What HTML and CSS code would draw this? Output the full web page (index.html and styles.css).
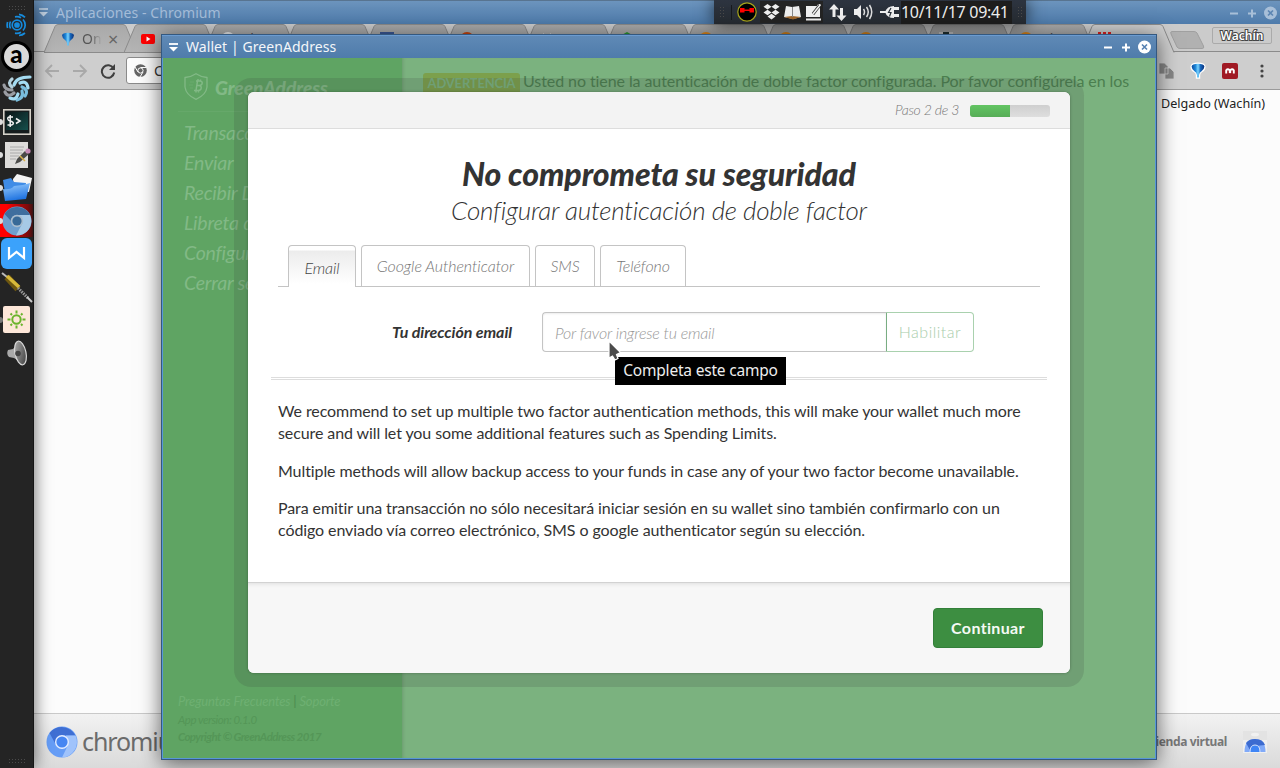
FILE: index.html
```html
<!DOCTYPE html>
<html lang="es">
<head>
<meta charset="utf-8">
<title>Wallet | GreenAddress</title>
<link rel="stylesheet" href="styles.css">
</head>
<body>
<svg width="0" height="0" class="defs">
  <defs>
    <linearGradient id="gTab" x1="0" y1="0" x2="0" y2="1"><stop offset="0" stop-color="#a9a9a9"/><stop offset="1" stop-color="#b5b5b5"/></linearGradient>
    <linearGradient id="gFolder" x1="0" y1="0" x2="0.3" y2="1"><stop offset="0" stop-color="#9dd0ff"/><stop offset="1" stop-color="#1f73e0"/></linearGradient>
    <linearGradient id="gPin" x1="0" y1="0" x2="1" y2="0"><stop offset="0" stop-color="#0b4a9c"/><stop offset=".3" stop-color="#1e86d8"/><stop offset=".5" stop-color="#7ad4ff"/><stop offset=".7" stop-color="#1668bd"/><stop offset="1" stop-color="#0a2f78"/></linearGradient>
    <linearGradient id="gTerm" x1="0" y1="0" x2="1" y2="1"><stop offset="0" stop-color="#0b1416"/><stop offset="1" stop-color="#15504c"/></linearGradient>
    <linearGradient id="gCone" x1="0" y1="0" x2="1" y2="1"><stop offset="0" stop-color="#b8b8b8"/><stop offset="1" stop-color="#333"/></linearGradient>
    <symbol id="tabShape" viewBox="0 0 94 29"><path d="M0 28.5 L11 2.5 Q12 .5 14 .5 H79 Q81 .5 82 2.5 L93 28.5Z" fill="url(#gTab)" stroke="#8b8b8b"/></symbol>
    <symbol id="pin" viewBox="0 0 14 15"><path d="M.6 3.500Q1 .8 7 .8T13.400 3.500Q13.200 6.500 10.500 8.200 8.400 9.500 8 12V14.500H6V12Q5.600 9.500 3.500 8.200 .8 6.500 .6 3.500Z" fill="url(#gPin)"/></symbol>
  </defs>
</svg>
<div class="desktop">
  <nav class="dock">
    <div class="grip"></div>
    <div class="dock-item"><svg width="22" height="24" viewBox="0 0 22 24" fill="none" stroke="#168bdc" stroke-width="1.7"><circle cx="11" cy="12" r="2" fill="#168bdc"/><circle cx="11" cy="12" r="4.800"/><path d="M9 3.800a8 8 0 0 1 6 1M17 6.500a8 8 0 0 1 0 11M15 19.200a8 8 0 0 1-6 1M4.500 8.500a8 8 0 0 0 0 7M1.600 9a10 10 0 0 0 0 6M13 1.300a10 10 0 0 1 6 3M19 20a10 10 0 0 1-6 2.500"/></svg></div>
    <div class="dock-item"><span class="app-a">a</span></div>
    <div class="dock-item"><svg width="30" height="28" viewBox="0 0 30 28" fill="none" stroke-width="3.200" stroke-linecap="round"><path d="M12 10Q14 2 28 2M18 8Q25 5 26 13" stroke="#a5dcf2"/><path d="M20 12Q27 15 23 21M20 16Q22 23 15 25" stroke="#79bddd"/><path d="M16 19Q14 26 8 23" stroke="#a5dcf2"/><path d="M12 18Q6 23 3 17M10 15Q3 15 2 10" stroke="#9a9da3"/><path d="M10 12Q5 8 10 4" stroke="#b5d2de"/></svg></div>
    <div class="dock-item"><i class="run"></i><svg width="28" height="26" viewBox="0 0 28 26"><rect x=".8" y=".8" width="26.400" height="24.400" fill="#151c1d" stroke="#d5d1c8" stroke-width="1.600"/><rect x="3" y="3" width="22" height="18" fill="url(#gTerm)"/><path d="M10 8H6.500Q4.500 8.200 4.800 10T7 12 10 13.500 8.500 16H4.500M7.200 6V18M13 9.500 17 12 13 14.500" fill="none" stroke="#f2f2f2" stroke-width="1.500"/></svg></div>
    <div class="dock-item"><i class="run"></i><svg width="28" height="28" viewBox="0 0 28 28"><rect x="2" y="1" width="23" height="26" fill="#dddcda"/><path d="M7 6H21M7 9H20M7 12H19M7 15H16M7 18H13" stroke="#aaa" stroke-width="1"/><path d="M12 23 14 18 22 10 26 13 17 21Z" fill="#4a4a48"/><path d="M17 15 22 20" stroke="#d8b24a" stroke-width="1.500"/><circle cx="25" cy="10" r="2.600" fill="#c78bb6"/></svg></div>
    <div class="dock-item"><i class="run"></i><svg width="30" height="28" viewBox="0 0 30 28"><path d="M11 5 15 0 30 4 27 18 12 16Z" fill="#f4f4f4"/><path d="M1 6 9 4 12 8 24 9 22 24 4 25Z" fill="#3f8ce6"/><path d="M1 15 Q9 16 12 12 Q20 12 28 9 L24 25 3 27Z" fill="url(#gFolder)"/></svg></div>
    <div class="dock-item active"><i class="run"></i><svg width="30" height="30" viewBox="0 0 30 30"><circle cx="15" cy="15" r="14.500" fill="#6f9fce"/><path d="M2.500 8A14.500 14.500 0 0 1 28 9H15A6 6 0 0 0 9 15Z" fill="#3f6e9e"/><path d="M28 9A14.500 14.500 0 0 1 14 29.500L20.500 17 15 9Z" fill="#a6c9e6"/><circle cx="15" cy="15" r="6.200" fill="#a9bccd"/><circle cx="15" cy="15" r="4.600" fill="#386997"/></svg></div>
    <div class="dock-item"><svg width="31" height="31" viewBox="0 0 31 31"><rect width="31" height="31" rx="6" fill="#3ba2fb"/><path d="M8 9V20L15.500 14 23 20V9" fill="none" stroke="#fff" stroke-width="2.200"/></svg></div>
    <div class="dock-item"><svg width="32" height="32" viewBox="0 0 32 32"><path d="M1 2 6 6" stroke="#bbb" stroke-width="2"/><path d="M6 6 17 18" stroke="#6e5710" stroke-width="7"/><path d="M6 5 18 16" stroke="#d7b93a" stroke-width="3.500"/><path d="M17 17 27 27" stroke="#999" stroke-width="3" stroke-dasharray="1.500 1"/><path d="M26 26 31 31" stroke="#ccc" stroke-width="2"/></svg></div>
    <div class="dock-item"><i class="run dim"></i><svg width="27" height="27" viewBox="0 0 27 27"><rect width="27" height="27" rx="2" fill="#fde7d9"/><g fill="none" stroke="#6ab42c" stroke-width="2"><circle cx="13.500" cy="13.500" r="4.200"/><path d="M13.500 4.500V7.500M13.500 19.500V22.500M4.500 13.500H7.500M19.500 13.500H22.500M7.500 7.500 9 9M18 18 19.500 19.500M19.500 7.500 18 9M9 18 7.500 19.500"/></g></svg></div>
    <div class="dock-item"><svg width="22" height="26" viewBox="0 0 22 26"><path d="M2 10 7 9 14 1 18 24 8 18 3 17Q0 14 2 10Z" fill="#a9a9a9"/><ellipse cx="14.500" cy="13" rx="5.500" ry="12" transform="rotate(-12 14.500 13)" fill="url(#gCone)" stroke="#d8d8d8" stroke-width="1.200"/><circle cx="12" cy="13.500" r="2.800" fill="#444"/></svg></div>
    <div class="grip bottom"></div>
  </nav>

  <section class="browser">
    <header class="b-title">
      <svg width="9" height="9" viewBox="0 0 9 9" class="t-menu"><path d="M0 1H9" stroke="#c0d0e2" stroke-width="1.600"/><path d="M0 4H9L4.500 8.500Z" fill="#c0d0e2"/></svg>
      <span class="t-text">Aplicaciones - Chromium</span>
      <svg width="50" height="14" viewBox="0 0 50 14" class="t-ctl dim"><path d="M2 7.500H10M20 7.500H28M24 3.500V11.500" stroke="currentColor" stroke-width="2"/><circle cx="42.500" cy="7" r="6.500" fill="currentColor"/><path d="M40 4.500 45 9.500M45 4.500 40 9.500" stroke="#5d86b3" stroke-width="1.600"/></svg>
    </header>
    <div class="tabs">
      <div class="tab"><svg class="shape"><use href="#tabShape"/></svg><svg class="fav" viewBox="0 0 14 15"><use href="#pin"/></svg><span class="fade">On</span><b class="x">×</b></div>
      <div class="tab"><svg class="shape"><use href="#tabShape"/></svg><svg class="fav" viewBox="0 0 14 14"><rect y="2" width="14" height="10" rx="2" fill="#f00"/><path d="M5.500 4.500V9.500L9.500 7Z" fill="#fff"/></svg><span>P</span></div>
      <div class="tab"><svg class="shape"><use href="#tabShape"/></svg><svg class="fav" viewBox="0 0 14 14"><circle cx="7" cy="7" r="7" fill="#eee"/><circle cx="7" cy="5" r="3" fill="#3a8fd0"/></svg><span>Si</span></div>
      <div class="tab"><svg class="shape"><use href="#tabShape"/></svg><i class="fav"></i><span>P</span></div>
      <div class="tab"><svg class="shape"><use href="#tabShape"/></svg><svg class="fav" viewBox="0 0 14 14"><rect width="14" height="14" fill="#3b5998"/></svg><span>M</span></div>
      <div class="tab"><svg class="shape"><use href="#tabShape"/></svg><svg class="fav" viewBox="0 0 14 14"><circle cx="7" cy="7" r="7" fill="#c8440c"/></svg><span>14</span></div>
      <div class="tab"><svg class="shape"><use href="#tabShape"/></svg><svg class="fav" viewBox="0 0 14 14"><path d="M3 1 6 4M11 1 8 4" stroke="#ccc"/></svg><span>C</span></div>
      <div class="tab"><svg class="shape"><use href="#tabShape"/></svg><svg class="fav" viewBox="0 0 14 14"><path d="M7 0 14 4V11L7 14 0 11V4Z" fill="#2a9a30"/></svg><span>C</span></div>
      <div class="tab"><svg class="shape"><use href="#tabShape"/></svg><svg class="fav" viewBox="0 0 14 14"><circle cx="7" cy="7" r="7" fill="#e48a1a"/></svg><span>F</span></div>
      <div class="tab"><svg class="shape"><use href="#tabShape"/></svg><svg class="fav" viewBox="0 0 14 14"><circle cx="7" cy="7" r="7" fill="#e48a1a"/></svg><span>C</span></div>
      <div class="tab"><svg class="shape"><use href="#tabShape"/></svg><svg class="fav" viewBox="0 0 14 14"><circle cx="7" cy="7" r="7" fill="#e48a1a"/></svg><span>A</span></div>
      <div class="tab"><svg class="shape"><use href="#tabShape"/></svg><svg class="fav" viewBox="0 0 14 14"><rect width="14" height="14" fill="#ccc"/><rect x="4" width="6" height="14" fill="#233"/></svg><span>D</span></div>
      <div class="tab"><svg class="shape"><use href="#tabShape"/></svg><svg class="fav" viewBox="0 0 14 14"><circle cx="7" cy="7" r="7" fill="#e48a1a"/></svg><span>Bit</span></div>
      <div class="tab on"><svg class="shape" viewBox="0 0 94 29"><path d="M0 28.500 L11 2.500 Q12 .5 14 .5 H79 Q81 .5 82 2.500 L93 28.500" fill="#cecece" stroke="#8b8b8b"/></svg><svg class="fav" viewBox="0 0 14 14"><path d="M0 0H3V14H0ZM5 0H8V14H5ZM10 0H13V14H10Z" fill="#e02020"/></svg><span>A</span></div>
      <svg class="newtab" width="35" height="18" viewBox="0 0 35 18"><path d="M2 .5H24Q26 .5 27 2L33.500 15Q34.500 17.500 32 17.500H10Q8 17.500 7 16L1 3Q0 .5 2 .5Z" fill="#b1b1b1" stroke="#a0a0a0"/></svg>
      <span class="user">Wachín</span>
    </div>
    <div class="toolbar">
      <svg width="60" height="16" viewBox="0 0 60 16" fill="none" stroke="#a9a9a9" stroke-width="1.800"><path d="M15 8H2M8 2 2 8 8 14M29 8H42M36 2 42 8 36 14"/></svg>
      <svg width="16" height="16" viewBox="0 0 16 16" class="reload"><path d="M13.500 5.500A6.200 6.200 0 1 0 14.200 9.500" fill="none" stroke="#3f3f3f" stroke-width="2"/><path d="M15 1V7H9Z" fill="#3f3f3f"/></svg>
      <div class="omni"><svg width="13" height="13" viewBox="0 0 13 13"><circle cx="6.500" cy="6.500" r="6.300" fill="#666"/><circle cx="6.500" cy="6.500" r="2.600" fill="#666" stroke="#fff"/><path d="M6.500 3.500H12.500M4 8 1 3M9 8 6 13" stroke="#fff"/></svg><span>Chromium</span></div>
      <svg width="15" height="16" viewBox="0 0 15 16" class="copy"><path d="M0 0H5.500L9 3.500V11H0ZM6 5H11L15 9V16H6Z" fill="#868686" stroke="#cecece" stroke-width=".8"/></svg>
      <svg width="16" height="17" viewBox="-1 -1 16 17" class="ext"><path d="M-.6 3.500Q0-.4 7-.4T14.600 3.500Q14.500 7.500 11 9.200 9.400 10 9.200 12V15.800H4.800V12Q4.600 10 3 9.200 -.5 7.500 -.6 3.500Z" fill="#fff"/><use href="#pin" width="14" height="15"/></svg>
      <svg width="16" height="16" viewBox="0 0 16 16"><rect width="16" height="16" rx="2" fill="#a01a24"/><path d="M4.200 10.500V7.300Q6 5 8 7.800 10 5 11.800 7.300V10.500" fill="none" stroke="#fff" stroke-width="1.900"/><circle cx="8" cy="9" r="1.300" fill="#fff"/></svg>
      <svg width="4" height="14" viewBox="0 0 4 14" class="dots" fill="#444"><circle cx="2" cy="2" r="1.600"/><circle cx="2" cy="7" r="1.600"/><circle cx="2" cy="12" r="1.600"/></svg>
    </div>
    <div class="page"><span>Delgado (Wachín)</span></div>
    <footer class="b-foot">
      <svg width="32" height="32" viewBox="0 0 32 32"><circle cx="16" cy="16" r="15.500" fill="#669df6"/><path d="M3.500 7A15.500 15.500 0 0 1 29.500 9.500H16A7 7 0 0 0 10 19Z" fill="#3f6fd3"/><path d="M29.500 9.500A15.500 15.500 0 0 1 16 31.500L22 19 20 9.500Z" fill="#a0c3fb"/><circle cx="16" cy="16" r="7" fill="#e4edff"/><circle cx="16" cy="16" r="5.600" fill="#4686f2"/></svg>
      <span class="brand">chromium</span>
      <span class="store">Tienda virtual</span>
      <svg width="24" height="22" viewBox="0 0 24 22"><rect width="24" height="9" fill="#e3e3e3"/><rect x="0" y="9" width="24" height="13" fill="#efefef"/><ellipse cx="12" cy="3.500" rx="4" ry="1.800" fill="#f1f1f1"/><path d="M1.500 21Q1.500 8 12 8T22.500 21Z" fill="#81aaf8"/><path d="M3 12Q6 8 12 8 20 8 22 14L12 15 7 19Z" fill="#3c6bd0"/><path d="M7 21Q7 14 12 14T17 21" fill="#3f85f5" stroke="#d5e2fb"/></svg>
    </footer>
  </section>

  <aside class="panel">
    <div class="grip tall"></div><i class="sep"></i>
    <svg width="20" height="20" viewBox="0 0 20 20" class="ninja"><circle cx="10" cy="10" r="9.200" fill="#000" stroke="#a8a51c" stroke-width="1.200"/><path d="M3 6H7.500V7.500H12.500V6H17V10.500H12.500V9H7.500V10.500H3Z" fill="#f00"/></svg>
    <div class="tray">
      <svg width="17" height="16" viewBox="0 0 17 16" fill="#eee"><path d="M4.500 0 8.500 2.800 4.500 5.500 .5 2.800ZM12.500 0 16.500 2.800 12.500 5.500 8.500 2.800ZM4.500 5.800 8.500 8.500 4.500 11.200 .5 8.500ZM12.500 5.800 16.500 8.500 12.500 11.200 8.500 8.500ZM8.500 9.700 12.500 12.500 8.500 15.500 4.500 12.500Z"/></svg>
      <svg width="17" height="15" viewBox="0 0 17 15"><path d="M0 12 2 1 8 2 15 1 17 12 9 14Z" fill="#eee"/><path d="M0 12 8 11 17 12 9 14.500Z" fill="#a0662a"/><path d="M8.500 2V12" stroke="#888"/></svg>
      <svg width="17" height="17" viewBox="0 0 17 17"><path d="M1 2H12V1L15 0V13H1ZM1 14.500H16V16.500H1Z" fill="#f0f0f0"/><path d="M8 10 14.500 1.500" stroke="#333" stroke-width="3"/><path d="M8 10 15.500 .5" stroke="#f0f0f0" stroke-width="1.600"/></svg>
    </div>
    <svg width="18" height="17" viewBox="0 0 18 17" fill="#eee"><path d="M5 0 10 5.500H6.500V13H3.500V5.500H0ZM12.500 17 7.500 11.500H11V4H14V11.500H17.500Z"/></svg>
    <svg width="19" height="16" viewBox="0 0 19 16"><path d="M0 5H3L7 1V15L3 11H0Z" fill="#eee"/><path d="M9.500 5Q11.500 8 9.500 11M12.500 3Q16 8 12.500 13M15.500 1Q20 8 15.500 15" fill="none" stroke="#ddd" stroke-width="1.500"/></svg>
    <svg width="20" height="14" viewBox="0 0 20 14"><path d="M0 7H6" stroke="#eee" stroke-width="2"/><path d="M5 7Q7 1 14 1V13Q7 13 5 7ZM14 2H19V5H14ZM14 9H19V12H14Z" fill="#eee"/><path d="M11 3 8.500 7.500H11L9.500 11.500" fill="none" stroke="#293038" stroke-width="1.200"/></svg>
    <span class="clock">10/11/17 09:41</span>
    <div class="grip tall"></div>
  </aside>

  <section class="wallet">
    <header class="w-title">
      <svg width="9" height="9" viewBox="0 0 9 9" class="t-menu"><path d="M0 1H9" stroke="#fff" stroke-width="1.800"/><path d="M0 4H9L4.500 8.500Z" fill="#fff"/></svg>
      <span class="t-text">Wallet | GreenAddress</span>
      <svg width="50" height="14" viewBox="0 0 50 14" class="t-ctl"><path d="M2 7.500H10M20 7.500H28M24 3.500V11.500" stroke="currentColor" stroke-width="2"/><circle cx="42.500" cy="7" r="6.500" fill="currentColor"/><path d="M40 4.500 45 9.500M45 4.500 40 9.500" stroke="#5580b1" stroke-width="1.600"/></svg>
    </header>
    <div class="w-body">
      <aside class="side">
        <div class="logo"><svg width="24" height="27" viewBox="0 0 24 27" fill="none" stroke="#82b986"><path d="M12 .7Q17 4 23 4.500V14Q22 22 12 26.300 2 22 1 14V4.500Q7 4 12 .7Z" stroke-width="1.300"/><path d="M12 8H16Q19 8.500 18 11 17 12.500 15 12.500 18 13 17 16 16 17.500 14 17.500H10M13.500 8 12 17.500M12.500 12.500H15M14 6V8M16.500 6.500V8M12 18V19.500M14.500 18V19.500" stroke-width="1.500"/><path d="M6 9H10M5 12H9M6 15H9" stroke-width=".7" opacity=".5"/></svg><span>GreenAddress</span></div>
        <ul><li>Transacciones</li><li>Enviar</li><li>Recibir Dinero</li><li>Libreta de direcciones</li><li>Configuración</li><li>Cerrar sesión</li></ul>
        <div class="legal"><p class="faq">Preguntas Frecuentes <i>|</i> Soporte</p><p>App version: 0.1.0</p><p class="copyr">Copyright © GreenAddress 2017</p></div>
      </aside>
      <main class="main"><span class="badge">ADVERTENCIA</span><span class="warn">Usted no tiene la autenticación de doble factor configurada. Por favor configúrela en los</span></main>
    </div>
    <div class="modal">
      <header class="m-head"><span>Paso 2 de 3</span><div class="progress"><div class="bar"></div></div></header>
      <div class="m-body">
        <h1>No comprometa su seguridad</h1>
        <h2>Configurar autenticación de doble factor</h2>
        <ul class="nav"><li class="sel">Email</li><li class="n-ga">Google Authenticator</li><li class="n-sms">SMS</li><li class="n-tel">Teléfono</li></ul>
        <div class="form"><label>Tu dirección email</label><div class="input">Por favor ingrese tu email</div><div class="enable">Habilitar</div></div>
        <div class="rule"></div>
        <p>We recommend to set up multiple two factor authentication methods, this will make your wallet much more<br>secure and will let you some additional features such as Spending Limits.</p>
        <p>Multiple methods will allow backup access to your funds in case any of your two factor become unavailable.</p>
        <p>Para emitir una transacción no sólo necesitará iniciar sesión en su wallet sino también confirmarlo con un<br>código enviado vía correo electrónico, SMS o google authenticator según su elección.</p>
      </div>
      <footer class="m-foot"><div class="go">Continuar</div></footer>
    </div>
  </section>
  <div class="tip">Completa este campo</div>
  <svg class="cursor" width="14" height="22" viewBox="0 0 14 22"><path d="M1 1V18L4.500 16 7 20 10 18.500 8.500 14.500 12.500 12.500Z" fill="#4b4b4b" stroke="#fff" stroke-width="1.200"/></svg>
</div>
</body>
</html>
```
FILE: styles.css
```css
* { box-sizing: border-box; }
body { margin: 0; overflow: hidden; font-family: "Lato", sans-serif; }
svg { flex: none; display: block; }
ul, p, h1, h2 { margin: 0; padding: 0; list-style: none; }
.defs { position: absolute; }
.desktop { position: relative; width: 1280px; height: 768px; overflow: hidden; background: #fcfcfc; }

/* dock */
.dock { position: absolute; z-index: 2; left: 0; top: 0; width: 34px; height: 768px; background: #242424; border-right: 1px solid #161616; display: flex; flex-direction: column; box-shadow: 0 0 17px rgba(0,0,0,.6); }
.grip { width: 17px; height: 5px; margin: 5px 0 0 8px; background: radial-gradient(circle, #4a4a4a 0.7px, transparent 1px) 0 0 / 3px 3px; flex: none; }
.grip.bottom { margin: auto 0 5px 8px; }
.dock-item { position: relative; height: 33px; flex: none; display: flex; align-items: center; justify-content: center; }
.grip + .dock-item { height: 30px; }
.grip + .dock-item + .dock-item { height: 32px; }
.dock-item.active { background: linear-gradient(90deg, #f00 20%, #7a0b0b 85%, #3a1414); }
.run { position: absolute; left: -3px; top: 14px; width: 6px; height: 6px; border-radius: 50%; background: #ddd; }
.run.dim { background: #777; }
.app-a { width: 31px; height: 31px; border-radius: 50%; border: 3px solid #000; background: #d9d9d9; font: 900 24px/20px "Lato", sans-serif; text-align: center; color: #000; }

/* browser */
.browser { position: absolute; left: 34px; top: 0; width: 1246px; height: 768px; display: flex; flex-direction: column; font-family: "Noto Sans", sans-serif; }
.b-title, .w-title { display: flex; align-items: center; height: 24px; flex: none; padding-left: 6px; background: linear-gradient(#5f89b6, #4f7cab); color: #f4f6f9; font: 14px/24px "Noto Sans", sans-serif; letter-spacing: .07px; }
.b-title { border-top: 1px solid #587490; background: linear-gradient(#6c94bd, #4e7bab); color: #a4bcd8; padding-left: 5px; }
.t-text { margin-left: 8px; }
.t-ctl { margin-left: auto; margin-right: 4px; color: #fff; }
.t-ctl.dim { color: #a8bfd8; margin-right: 2px; }
.tabs { display: flex; height: 28px; padding-left: 10px; background: #cbcbcb; border-bottom: 1px solid #8b8b8b; flex: none; }
.tab { position: relative; width: 79.8px; flex: none; height: 28px; display: flex; align-items: center; padding: 1px 0 0 17px; font-size: 14px; color: #444; }
.shape { position: absolute; left: 0; top: 0; width: 94px; height: 29px; }
.fav { position: relative; width: 14px; height: 14px; flex: none; }
.tab span { position: relative; margin-left: 8px; }
.tab .fade { width: 20px; overflow: hidden; color: #555; margin-left: 7px; -webkit-mask: linear-gradient(90deg, #000 40%, transparent); mask: linear-gradient(90deg, #000 40%, transparent); }
.x { position: relative; font-weight: 400; font-size: 18px; line-height: 20px; margin-left: 6px; color: #666; }
.newtab { margin: 7px 0 0 9px; }
.user { margin: 3px 8px 0 auto; width: 60px; height: 17px; border: 1px solid #aaa; border-radius: 2px; font: 600 12px/15px "Noto Sans", sans-serif; color: #fff; text-align: center; -webkit-text-stroke: 2px #444; paint-order: stroke fill; }
.toolbar { display: flex; align-items: center; height: 38px; padding: 0 16px 0 10px; background: #cecece; border-bottom: 1px solid #9a9a9a; flex: none; }
.reload { margin-left: -4px; }
.reload + .omni { margin-left: 10px; }
.omni { display: flex; align-items: center; gap: 7px; width: 1015px; height: 27px; padding-left: 7px; background: #fcfcfc; border: 1px solid #8a8a8a; border-radius: 3px; font-size: 14px; color: #333; }
.copy { margin-left: 18px; }
.ext { margin: 0 16px; }
.dots { margin-left: auto; }
.page { flex: 1; text-align: right; padding: 6px 15px 0 0; font-size: 12.6px; line-height: 16px; color: #222; }
.b-foot { height: 55px; flex: none; border-top: 1px solid #c9c9c9; background: linear-gradient(#f2f2f2, #dadada); display: flex; align-items: center; padding: 2px 13px 0 12px; }
.brand { margin: -3px 0 0 4px; font-size: 25px; letter-spacing: -1.1px; color: #6b6b6b; }
.store { margin-left: auto; margin-right: 16px; margin-top: -1px; font-size: 12px; font-weight: 700; letter-spacing: -.35px; color: #777; }

/* system tray */
.panel { position: absolute; left: 714px; top: 0; width: 312px; height: 24px; display: flex; align-items: center; background: linear-gradient(#2d3440, #262b31); box-shadow: 0 0 18px rgba(0,0,0,.7); }
.grip.tall { width: 6px; height: 12px; margin: 0 0 0 5px; background-size: 3px 3px; }
.sep { width: 1px; height: 15px; margin: 0 5px 0 6px; background: #16191d; }
.tray { display: flex; align-items: center; gap: 4px; margin: 0 6px 0 3px; padding: 0 3px; height: 22px; width: 63px; background: #242424; flex: none; }
.panel > svg + svg { margin-left: 7px; }
.clock { flex: none; margin-left: 1px; width: 111px; height: 23px; background: #1d1d1d; color: #eee; font: 16px/23px "Noto Sans", sans-serif; letter-spacing: -.3px; white-space: nowrap; }

/* wallet window */
.wallet { position: absolute; left: 161px; top: 34px; width: 996px; height: 726px; border: 1px solid #34587f; box-shadow: 0 3px 20px rgba(0,0,0,.6); display: flex; flex-direction: column; background: #5896d8; padding: 0 1px 1px; }
.w-title { height: 23px; margin: 0 -1px; padding-left: 7px; border-top: 1px solid #6b9bd0; line-height: 22px; }
.w-body { flex: 1; display: flex; min-height: 0; }
.side { width: 240px; background: #5fa463; padding: 15px; display: flex; flex-direction: column; color: #82b986; font-style: italic; white-space: nowrap; flex: none; margin-right: -1px; overflow: hidden; }
.logo { display: flex; align-items: center; gap: 7px; padding: 0 0 11px 6px; height: 39px; border-bottom: 1px solid #66a86a; font-size: 19px; font-weight: 900; }
.logo span { padding-top: 2px; }
.side ul { padding: 6px 0 0 6px; }
.side li { height: 30px; line-height: 30px; font-size: 19.5px; letter-spacing: -.2px; }
.legal { margin-top: auto; font-size: 11.5px; line-height: 17px; letter-spacing: -.45px; color: #549657; margin-bottom: -2px; }
.legal .faq { font-size: 13px; line-height: 19px; letter-spacing: -.15px; color: #6eb072; }
.faq i { color: #4b8a4e; }
.copyr { font-weight: 700; letter-spacing: -.55px; }
.main { flex: 1; position: relative; background: #7bb27f; padding: 13px 0 0 21px; display: flex; align-items: flex-start; box-shadow: inset 3px 0 4px -3px rgba(0,0,0,.2); color: #4b7f4f; overflow: hidden; }
.badge { width: 97px; height: 21px; margin-top: 2px; border-radius: 3px; background: #7ca04c; color: #79b281; font-size: 13px; line-height: 20px; text-align: center; font-weight: 700; letter-spacing: -.2px; }
.warn { margin-left: 3px; font-size: 16px; line-height: 20px; letter-spacing: -.08px; white-space: nowrap; }

/* dialog */
.modal { position: absolute; left: 86px; top: 57px; width: 822px; height: 581px; background: #fff; border-radius: 6px; box-shadow: 0 0 3px rgba(0,0,0,.3), 0 0 0 14px rgba(51,51,51,.15); display: flex; flex-direction: column; }
.m-head { height: 37px; flex: none; background: #f3f3f3; border-bottom: 1px solid #ddd; border-radius: 6px 6px 0 0; display: flex; align-items: center; justify-content: flex-end; padding-right: 20px; gap: 11px; font: italic 300 14px "Lato", sans-serif; letter-spacing: -.3px; color: #777; }
.m-head span { margin-top: -2px; }
.progress { width: 80px; height: 12px; margin-top: 2px; border-radius: 3px; background: linear-gradient(#cfcfcf, #dedede); overflow: hidden; }
.bar { width: 50%; height: 12px; background: linear-gradient(#62c462, #57ad57); }
.m-body { flex: 1; padding: 24px 30px 0; color: #333; }
h1 { font: italic 900 32px/42px "Lato", sans-serif; text-align: center; letter-spacing: -.04px; }
h2 { font: italic 300 26px/32px "Lato", sans-serif; text-align: center; letter-spacing: -.25px; margin-top: -1px; }
.nav { display: flex; gap: 5px; height: 42px; margin-top: 19px; padding-left: 10px; border-bottom: 1px solid #c4c4c4; font: italic 300 16px/39px "Lato", sans-serif; letter-spacing: -.08px; color: #777; }
.nav li { height: 41px; border: 1px solid #c4c4c4; border-bottom: 0; border-radius: 4px 4px 0 0; text-align: center; white-space: nowrap; }
.nav .sel { width: 68px; height: 42px; background: linear-gradient(#fff 4px, #ececec 5px, #fff 38px); color: #444; line-height: 43px; }
.n-ga { width: 169px; }
.n-sms { width: 60px; }
.n-tel { width: 86px; }
.form { display: flex; margin-top: 25px; height: 40px; }
.form label { width: 234px; margin-right: 30px; text-align: right; font: italic 700 16px/40px "Lato", sans-serif; letter-spacing: -.06px; }
.input { width: 344px; border: 1px solid #c4c4c4; border-right: 0; border-radius: 4px 0 0 4px; padding-left: 12px; font: italic 300 16px/39px "Lato", sans-serif; letter-spacing: -.16px; color: #999; box-shadow: inset 0 1px 2px rgba(0,0,0,.08); }
.enable { width: 88px; border: 1px solid #a9d1ae; border-left-color: #79ad82; border-radius: 0 4px 4px 0; font-size: 16px; font-weight: 300; line-height: 38px; text-align: center; color: #a9cdac; letter-spacing: .5px; }
.rule { height: 3px; margin: 25px -7px 20px; border: solid #ddd; border-width: 1px 0; }
.m-body p { font-size: 16px; line-height: 22px; white-space: nowrap; margin-bottom: 15.5px; letter-spacing: -.092px; }
.m-foot { height: 91px; flex: none; background: #f7f7f7; border-top: 1px solid #d2d2d2; box-shadow: inset 0 4px 4px -3px rgba(0,0,0,.1); border-radius: 0 0 6px 6px; display: flex; justify-content: flex-end; padding: 25px 27px 0 0; }
.go { width: 110px; height: 40px; border: 1px solid #33803a; border-radius: 4px; background: #3d8e41; color: #f5faf5; font: 700 16px/38px "Lato", sans-serif; letter-spacing: .35px; text-align: center; }

.tip { position: absolute; left: 615px; top: 357px; width: 171px; height: 28px; background: #000; color: #eee; font: 15.5px/27px "Noto Sans", sans-serif; text-align: center; letter-spacing: -.2px; white-space: nowrap; }
.cursor { position: absolute; left: 608px; top: 340px; }
```
